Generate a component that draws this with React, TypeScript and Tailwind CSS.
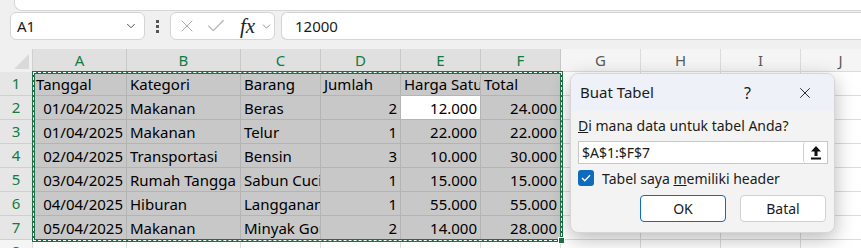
import { ChevronDown, X, Check } from "lucide-react";

const cols = ["A", "B", "C", "D", "E", "F", "G", "H", "I", "J"];
const widths = [94, 114, 80, 80, 80, 80, 80, 80, 80, 80];

const data: { v: string; r?: boolean }[][] = [
  [{ v: "Tanggal" }, { v: "Kategori" }, { v: "Barang" }, { v: "Jumlah" }, { v: "Harga Satuan" }, { v: "Total" }],
  [{ v: "01/04/2025", r: true }, { v: "Makanan" }, { v: "Beras" }, { v: "2", r: true }, { v: "12.000", r: true }, { v: "24.000", r: true }],
  [{ v: "01/04/2025", r: true }, { v: "Makanan" }, { v: "Telur" }, { v: "1", r: true }, { v: "22.000", r: true }, { v: "22.000", r: true }],
  [{ v: "02/04/2025", r: true }, { v: "Transportasi" }, { v: "Bensin" }, { v: "3", r: true }, { v: "10.000", r: true }, { v: "30.000", r: true }],
  [{ v: "03/04/2025", r: true }, { v: "Rumah Tangga" }, { v: "Sabun Cuci" }, { v: "1", r: true }, { v: "15.000", r: true }, { v: "15.000", r: true }],
  [{ v: "04/04/2025", r: true }, { v: "Hiburan" }, { v: "Langganan" }, { v: "1", r: true }, { v: "55.000", r: true }, { v: "55.000", r: true }],
  [{ v: "05/04/2025", r: true }, { v: "Makanan" }, { v: "Minyak Goreng" }, { v: "2", r: true }, { v: "14.000", r: true }, { v: "28.000", r: true }],
];

function FormulaBar() {
  return (
    <div className="flex items-center h-[28px] mt-[1px] pl-[10px]">
      <div className="flex items-center justify-between w-[135px] h-[28px] bg-white border border-[#d4d4d4] rounded-[6px] pl-[6px] pr-[6px]">
        <span className="text-[15px] text-[#1b1b1b]">A1</span>
        <ChevronDown size={14} strokeWidth={1.6} className="text-[#444]" />
      </div>
      <div className="flex flex-col gap-[2px] mx-[11px] items-center">
        <div className="w-[3px] h-[3px] bg-[#555]" />
        <div className="w-[3px] h-[3px] bg-[#555]" />
        <div className="w-[3px] h-[3px] bg-[#555]" />
      </div>
      <div className="flex items-center w-[105px] h-[28px] bg-white border border-[#d4d4d4] rounded-[6px] pl-[6px]">
        <X size={20} strokeWidth={1.2} className="text-[#b0b0b0]" />
        <Check size={22} strokeWidth={1.2} className="text-[#b0b0b0] ml-[8px]" />
        <span className="ml-[13px] text-[21px] italic text-[#222] leading-none" style={{ fontFamily: '"Liberation Serif", serif' }}>
          fx
        </span>
        <ChevronDown size={13} strokeWidth={1.5} className="text-[#777] ml-[5px]" />
      </div>
      <div className="flex items-center flex-1 h-[28px] ml-[6px] bg-white border border-r-0 border-[#d4d4d4] rounded-l-[6px] pl-[13px]">
        <span className="text-[15px] text-[#1b1b1b]">12000</span>
      </div>
    </div>
  );
}

function Sheet() {
  const rowCount = 8;
  return (
    <div className="relative mt-[9px]">
      <div className="flex h-[23px]">
        <div className="w-[33px] shrink-0 relative bg-[#f0f0f0] border-r border-[#d0d0d0]">
          <div className="absolute right-[3px] bottom-[3px] w-0 h-0 border-l-[15px] border-l-transparent border-b-[15px] border-b-[#d9d9d9]" />
        </div>
        {cols.map((c, i) => (
          <div
            key={c}
            style={{ width: widths[i] }}
            className={`shrink-0 flex items-center justify-center text-[15px] border-r ${
              i < 6
                ? "bg-[#e0e0e0] text-[#107c41] border-[#c8c8c8]"
                : "bg-[#f5f5f5] text-[#5a5a5a] border-[#dcdcdc] border-b"
            }`}
          >
            {c}
          </div>
        ))}
      </div>
      {Array.from({ length: rowCount }).map((_, r) => (
        <div key={r} className="flex h-[24px]">
          <div
            className={`w-[33px] shrink-0 flex items-center justify-center text-[15px] border-b border-r ${
              r < 7 ? "bg-[#e6e6e6] text-[#107c41] border-[#cfcfcf]" : "bg-[#f5f5f5] text-[#5a5a5a] border-[#dcdcdc]"
            }`}
          >
            {r + 1}
          </div>
          {cols.map((c, i) => {
            const cell = r < 7 && i < 6 ? data[r][i] : null;
            const selected = r < 7 && i < 6;
            const active = r === 1 && i === 4;
            return (
              <div
                key={c}
                style={{ width: widths[i] }}
                className={`shrink-0 flex items-end overflow-hidden whitespace-nowrap border-r border-b text-[15px] leading-[21px] text-black px-[3px] ${
                  cell?.r ? "justify-end" : "justify-start"
                } ${
                  active
                    ? "bg-white border-[#b4b4b4]"
                    : selected
                    ? "bg-[#c8c8c8] border-[#b4b4b4]"
                    : "bg-white border-[#dcdcdc]"
                }`}
              >
                {cell?.v}
              </div>
            );
          })}
        </div>
      ))}
      {/* copy selection outline */}
      <div className="absolute left-[32px] top-[22px] w-[531px] h-[171px] border-[3px] border-[#1e7145]">
        <div className="absolute -inset-[2px] border border-dashed border-white" />
      </div>
      <div className="absolute left-[558px] top-[188px] w-[7px] h-[7px] bg-[#1e7145] border border-white" />
    </div>
  );
}

function Dialog() {
  return (
    <div className="absolute left-[570px] top-[73px] w-[265px] h-[160px] rounded-[8px] overflow-hidden bg-[#f3f3f3] border border-[#d6d6d6] shadow-[0_6px_20px_rgba(0,0,0,0.28)]">
      <div className="flex items-center h-[37px] bg-[#eef1f7] pl-[9px]">
        <span className="text-[15px] text-[#1b1b1b]">Buat Tabel</span>
        <span className="ml-[90px] text-[16px] text-[#1b1b1b]">?</span>
        <X size={18} strokeWidth={1.2} className="ml-[45px] text-[#1b1b1b]" />
      </div>
      <div className="px-[7px] pt-[5px]">
        <div className="text-[14px] text-[#1b1b1b] leading-[20px]">
          <span className="underline">D</span>i mana data untuk tabel Anda?
        </div>
        <div className="flex items-center h-[23px] mt-[5px] w-[250px] bg-white border border-[#c8c8c8]">
          <span className="flex-1 pl-[3px] text-[14px] text-[#1b1b1b]">$A$1:$F$7</span>
          <div className="w-[24px] h-[21px] flex items-center justify-center border-l border-[#d0d0d0] rounded-[3px]">
            <svg width="12" height="14" viewBox="0 0 12 14">
              <path d="M6 0 L11 5.5 L7.5 5.5 L7.5 10 L4.5 10 L4.5 5.5 L1 5.5 Z" fill="#111" />
              <rect x="1" y="11.5" width="10" height="2" fill="#111" />
            </svg>
          </div>
        </div>
        <div className="flex items-center h-[20px] mt-[4px]">
          <div className="w-[16px] h-[16px] rounded-[3px] bg-[#0f6cbd] flex items-center justify-center">
            <svg width="10" height="8" viewBox="0 0 10 8">
              <path d="M1 4 L3.8 6.8 L9 1.2" fill="none" stroke="white" strokeWidth="1.3" />
            </svg>
          </div>
          <span className="ml-[8px] text-[14px] text-[#1b1b1b]">
            Tabel saya <span className="underline">m</span>emiliki header
          </span>
        </div>
        <div className="flex justify-end gap-[14px] mt-[7px] pr-[1px]">
          <button className="w-[86px] h-[27px] bg-white border border-[#0f6cbd] rounded-[4px] text-[14px] text-[#1b1b1b]">
            OK
          </button>
          <button className="w-[86px] h-[27px] bg-white border border-[#d1d1d1] rounded-[4px] text-[14px] text-[#1b1b1b]">
            Batal
          </button>
        </div>
      </div>
    </div>
  );
}

export default function App() {
  return (
    <div
      className="relative w-[861px] h-[248px] overflow-hidden bg-[#f0f0f0]"
      style={{ fontFamily: '"Noto Sans", "Open Sans", sans-serif' }}
    >
      <div className="ml-[14px] h-[11px] bg-white border border-t-0 border-r-0 border-[#d6d6d6] rounded-bl-[8px]" />
      <FormulaBar />
      <Sheet />
      <Dialog />
    </div>
  );
}
